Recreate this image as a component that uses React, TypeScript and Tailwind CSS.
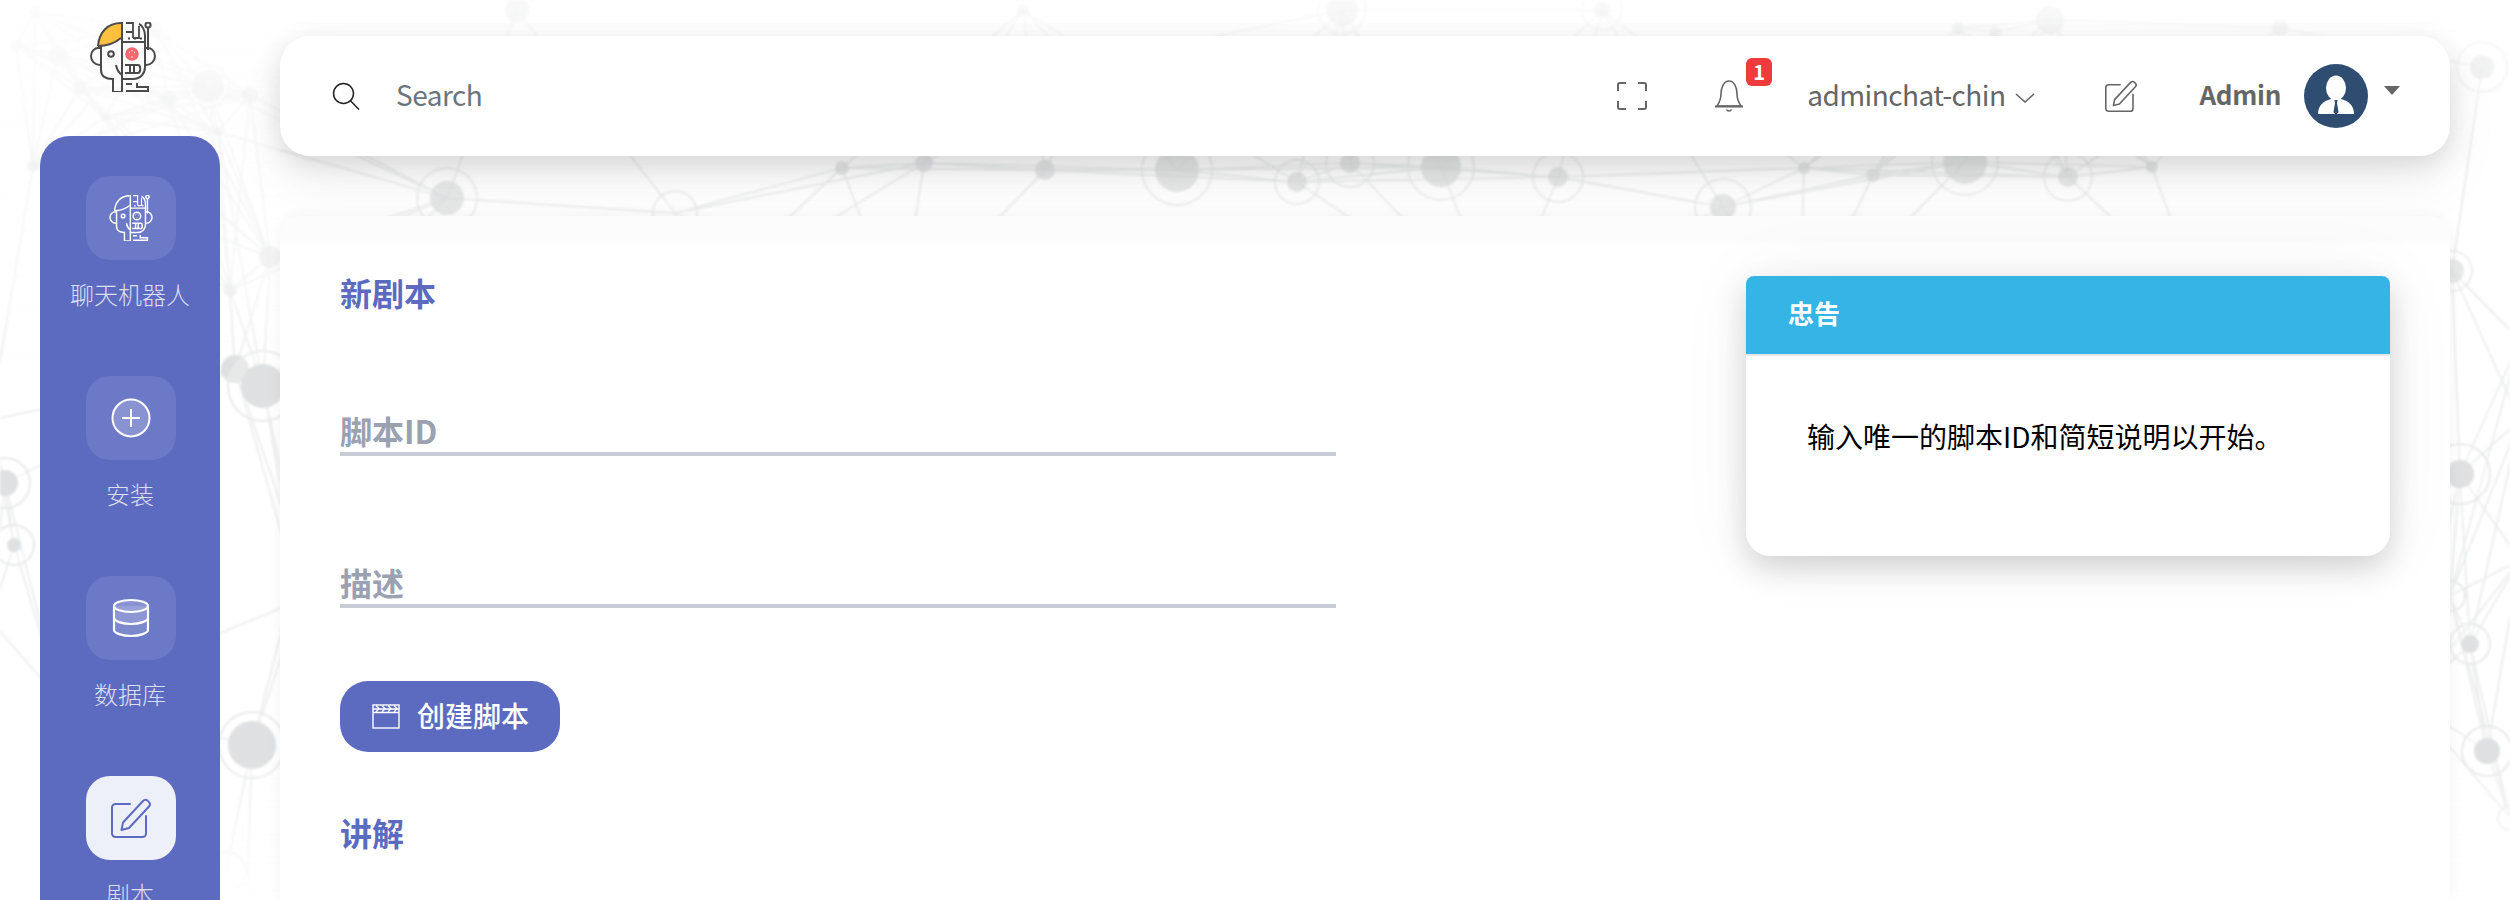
import React from "react";

const FONT = { fontFamily: '"Noto Sans CJK SC", "Noto Sans", sans-serif' };

type N = [number, number, number, number];
const nodes: N[] = [
  [16, 46, 6, 0], [58, 55, 10, 0], [80, 88, 7, 0], [208, 86, 16, 21], [168, 99, 8, 0], [250, 95, 8, 0], [105, 117, 4, 0],
  [218, 132, 4, 0], [33, 166, 6, 0], [270, 257, 11, 0], [230, 290, 7, 0], [155, 30, 8, 0], [35, 12, 6, 0],
  [235, 369, 14, 0], [263, 386, 22, 35], [5, 483, 13, 25], [14, 545, 7, 20], [252, 745, 24, 33], [226, 872, 0, 20], [247, 905, 0, 15],
  [447, 198, 17, 30], [1177, 170, 22, 35], [1045, 170, 10, 0], [924, 163, 9, 0], [842, 168, 7, 0], [1297, 182, 10, 22], [1350, 163, 10, 24],
  [675, 213, 0, 22], [517, 10, 12, 0], [1342, 10, 16, 24], [1023, 10, 6, 0],
  [1441, 167, 20, 33], [1558, 177, 10, 25], [1723, 207, 13, 28], [1873, 175, 7, 0], [1965, 162, 22, 33], [2068, 177, 10, 24], [2152, 167, 6, 0], [1804, 168, 6, 0],
  [1602, 10, 8, 20], [2050, 20, 14, 0], [1958, 28, 6, 0], [1995, 32, 6, 0], [2280, 28, 8, 0], [2482, 67, 12, 25],
  [2452, 271, 12, 20], [2460, 474, 14, 30], [2470, 644, 9, 20], [2450, 596, 0, 15], [2487, 751, 13, 25], [2510, 818, 0, 12],
  [60, 700, 0, 0], [2520, 340, 0, 0], [2520, 420, 0, 0], [2520, 560, 0, 0], [2410, 700, 0, 0], [-10, 620, 0, 0], [-10, 420, 0, 0],
  [700, 300, 0, 0], [900, 320, 0, 0], [1100, 60, 0, 0], [1500, 320, 0, 0], [1800, 330, 0, 0], [2200, 300, 0, 0], [300, 560, 0, 0], [300, 600, 0, 0],
];
const links: [number, number, number, number][] = [];
nodes.forEach((a, i) => {
  nodes.forEach((b, j) => {
    if (j > i && Math.hypot(a[0] - b[0], a[1] - b[1]) < 270) links.push([a[0], a[1], b[0], b[1]]);
  });
});

function Network() {
  return (
    <svg className="absolute inset-0 blur-[0.8px]" width={2510} height={900} viewBox="0 0 2510 900" fill="none">
      <defs>
        <linearGradient id="topFade" x1="0" y1="0" x2="0" y2="1">
          <stop offset="0" stopColor="#fff" stopOpacity="0.75" />
          <stop offset="0.3" stopColor="#fff" stopOpacity="0.55" />
          <stop offset="1" stopColor="#fff" stopOpacity="0" />
        </linearGradient>
        <linearGradient id="botFade" x1="0" y1="0" x2="0" y2="1">
          <stop offset="0" stopColor="#fff" stopOpacity="0" />
          <stop offset="1" stopColor="#fff" stopOpacity="1" />
        </linearGradient>
        <linearGradient id="leftFade" x1="0" y1="0" x2="0" y2="1">
          <stop offset="0" stopColor="#fff" stopOpacity="0.6" />
          <stop offset="0.8" stopColor="#fff" stopOpacity="0.5" />
          <stop offset="1" stopColor="#fff" stopOpacity="0" />
        </linearGradient>
      </defs>
      {links.map((l, i) => (
        <line key={i} x1={l[0]} y1={l[1]} x2={l[2]} y2={l[3]} stroke="#ebecec" strokeWidth={1.8} />
      ))}
      {nodes.map((n, i) => (
        <g key={i} opacity={n[1] < 300 ? 0.75 : 1}>
          {n[3] > 0 && <circle cx={n[0]} cy={n[1]} r={n[3]} stroke="#e8e9e9" strokeWidth={2} fill="#fff" fillOpacity={0.25} />}
          {n[2] > 0 && <circle cx={n[0]} cy={n[1]} r={n[2]} fill="#dfe0e1" />}
        </g>
      ))}
      <rect x={0} y={0} width={2510} height={150} fill="url(#topFade)" />
      <rect x={0} y={0} width={280} height={360} fill="url(#leftFade)" />
      <rect x={0} y={760} width={2510} height={140} fill="url(#botFade)" />
    </svg>
  );
}

function Head({ mono, className }: { mono?: boolean; className: string }) {
  const s = mono ? "#ffffff" : "#4a4a4a";
  return (
    <svg viewBox="0 0 66 70" className={className} fill="none" stroke={s} strokeWidth={mono ? 2.2 : 2} strokeLinecap="butt">
      {!mono && <path d="M31 1C19 1 10 9 8 24c7 0 17-3 23-8V1Z" fill="#fbc03d" stroke="none" />}
      <path d="M31 1C18 1 9 10 8 24" stroke={s} />
      <path d="M8 24c8 0 17-3 23-8" />
      <path d="M11 24v24c0 6 4 9 12 9v13h9" />
      <path d="M10 26H8c-3 0-7 3-7 8s4 9 9 9" />
      <path d="M56 26h2c3 0 7 3 7 8s-4 9-9 9" />
      <path d="M32 0v70" />
      <circle cx={21} cy={32} r={2.8} />
      <path d="M26 43c1 5 3 8 6 10" />
      <path d="M36 1h7v9h-7M49 4v12h-6M43 5v11" strokeWidth={1.8} />
      <path d="M32 20h23" />
      <path d="M38 16.5h2M44 16.5h2M50 16.5h2" />
      <path d="M49 2c3 1 6 6 6 12v31c0 6-4 12-12 12H32" />
      <circle cx={58} cy={3} r={2.6} />
      <path d="M58 6v22" />
      <circle cx={42} cy={32} r={5.8} fill={mono ? "none" : "#f5686d"} stroke={mono ? s : "#f5686d"} />
      <path d="M39 30.5h1M44 30.5h1M41.5 35h1M41.5 28.5h1" stroke={mono ? s : "#fff"} strokeWidth={1.4} />
      <path d="M35 43h13c3 0 3 8 0 8H35M40 43v8M44 43v8" />
      <path d="M36 69h22v-4H47v-4M36 62h6" />
    </svg>
  );
}

function EditIcon({ className, stroke, w = 2 }: { className: string; stroke: string; w?: number }) {
  return (
    <svg viewBox="0 0 40 40" className={className} fill="none" stroke={stroke} strokeWidth={w} strokeLinejoin="round" strokeLinecap="round">
      <path d="M19 6H4.5A3.5 3.5 0 0 0 1 9.500V35.500A3.500 3.500 0 0 0 4.500 39H31.500A3.500 3.500 0 0 0 35 35.500V18" />
      <path d="M12 24.500 32 3a3.200 3.200 0 0 1 5 0l1 1.200a3.200 3.200 0 0 1 0 4.300L18 30l-7.500 2z" />
    </svg>
  );
}

function NavItem({ label, active, children }: { label: string; active?: boolean; children: React.ReactNode }) {
  return (
    <div className="flex flex-col items-center h-[200px] shrink-0">
      <div className={"ml-[2px] w-[90px] h-[84px] rounded-[24px] flex items-center justify-center " + (active ? "bg-[#eef0f9]" : "bg-[#6c79c7]")}>
        {children}
      </div>
      <div className="mt-[16px] text-[24px] leading-[36px] text-[#dcdff2] font-light">{label}</div>
    </div>
  );
}

function Clapper() {
  return (
    <svg viewBox="0 0 28 25" className="w-[28px] h-[25px]" fill="none" stroke="#fff" strokeWidth={1.4}>
      <rect x={1} y={1} width={26} height={23} />
      <path d="M1 8.500h26M1 5h26" />
      <path d="M4 1.500l3 3-3 3.500M10 1.500l3 3-3 3.500M16 1.500l3 3-3 3.500M22 1.500l3 3-3 3.500" strokeWidth={1.2} />
    </svg>
  );
}

function Field({ label, className }: { label: string; className: string }) {
  return (
    <div className={"border-b-4 border-[#c8ccd6] " + className}>
      <div className="text-[32px] leading-[36px] pb-[4px] font-bold text-[#9aa1b1]">{label}</div>
    </div>
  );
}

export default function App() {
  return (
    <div className="relative w-full h-[900px] overflow-hidden bg-white" style={FONT}>
      <Network />
      <div className="relative flex h-full">
        <aside className="w-[180px] ml-[40px] shrink-0 flex flex-col">
          <div className="h-[136px] pt-[22px] pl-[50px] shrink-0">
            <Head className="w-[66px] h-[70px]" />
          </div>
          <nav className="flex-1 bg-[#5c6bc0] rounded-t-[30px] pt-[40px] flex flex-col overflow-hidden">
            <NavItem label="聊天机器人">
              <Head mono className="w-[44px] h-[46px]" />
            </NavItem>
            <NavItem label="安装">
              <svg viewBox="0 0 40 40" className="w-[40px] h-[40px]" fill="rgba(255,255,255,0.2)" stroke="#fff" strokeWidth={2}>
                <circle cx={20} cy={20} r={18.500} />
                <path d="M20 11v18M11 20h18" fill="none" />
              </svg>
            </NavItem>
            <NavItem label="数据库">
              <svg viewBox="0 0 38 40" className="w-[38px] h-[40px]" fill="none" stroke="#fff" strokeWidth={2.200}>
                <path d="M2 8v24c0 3 8 6 17 6s17-3 17-6V8" fill="rgba(255,255,255,0.12)" />
                <ellipse cx={19} cy={8} rx={17} ry={6} fill="rgba(255,255,255,0.2)" />
                <path d="M2 20c0 3 8 6 17 6s17-3 17-6" />
                <path d="M2 14h34v6c0 3-8 6-17 6s-17-3-17-6z" fill="rgba(255,255,255,0.12)" stroke="none" />
              </svg>
            </NavItem>
            <NavItem label="剧本" active>
              <EditIcon className="w-[40px] h-[40px]" stroke="#5c6bc0" />
            </NavItem>
          </nav>
        </aside>

        <main className="flex-1 min-w-0 ml-[60px] mr-[60px] pt-[36px] flex flex-col">
          <header className="h-[120px] shrink-0 bg-white rounded-[30px] shadow-[0_8px_28px_rgba(0,0,0,0.13),0_30px_60px_rgba(0,0,0,0.05)] flex items-center justify-between pl-[52px] pr-[50px]">
            <div className="flex items-center">
              <svg viewBox="0 0 28 28" className="w-[28px] h-[28px]" fill="none" stroke="#222" strokeWidth={1.500}>
                <circle cx={11.500} cy={11.500} r={10} />
                <path d="M18.500 18.800 27 27.500" />
              </svg>
              <span className="ml-[36px] text-[28px] leading-[36px] pb-[4px] tracking-[-0.5px] text-[#6c757d]">Search</span>
            </div>
            <div className="flex items-center text-[#666]">
              <svg viewBox="0 0 30 28" className="w-[30px] h-[28px]" fill="none" stroke="#666" strokeWidth={2}>
                <path d="M9 1H3a2 2 0 0 0-2 2v6M21 1h6a2 2 0 0 1 2 2v6M9 27H3a2 2 0 0 1-2-2v-6M21 27h6a2 2 0 0 0 2-2v-6" />
              </svg>
              <div className="relative ml-[67px] w-[30px] h-[32px]">
                <svg viewBox="0 0 30 32" className="w-[30px] h-[32px]" fill="none" stroke="#666" strokeWidth={1.600}>
                  <path d="M3 26c2-3 4-6 4-12 0-7 3-13 8-13s8 6 8 13c0 6 2 9 4 12z" />
                  <path d="M1 26.500h28" strokeWidth={2} />
                  <path d="M12.500 29.500c1 2 4 2 5 0" />
                </svg>
                <div className="absolute left-[32px] top-[-22px] w-[26px] h-[28px] rounded-[6px] bg-[#ef3b3b] text-white text-[20px] leading-[28px] font-bold text-center">1</div>
              </div>
              <span className="ml-[63px] text-[28px] leading-[36px] pb-[4px] tracking-[-0.55px]">adminchat-chin</span>
              <svg viewBox="0 0 20 10" className="ml-[10px] w-[20px] h-[10px] mt-[4px]" fill="none" stroke="#666" strokeWidth={1.600}>
                <path d="M1 1l9 8 9-8" />
              </svg>
              <EditIcon className="ml-[70px] w-[32px] h-[32px]" stroke="#666" />
              <span className="ml-[62px] text-[26px] leading-[36px] pb-[4px] font-bold tracking-[-0.3px]">Admin</span>
              <svg viewBox="0 0 64 64" className="ml-[23px] w-[64px] h-[64px]">
                <circle cx={32} cy={32} r={32} fill="#2e4d70" />
                <ellipse cx={32} cy={24} rx={10} ry={12.500} fill="#fff" />
                <path d="M14 50c0-8 5-13 13-15h10c8 2 13 7 13 15z" fill="#fff" />
                <path d="M30.500 36h3l-.5 3 1.500 9-2.500 3-2.500-3 1.500-9z" fill="#2e4d70" />
              </svg>
              <div className="ml-[16px] mb-[12px] w-0 h-0 border-l-[8px] border-r-[8px] border-t-[9px] border-l-transparent border-r-transparent border-t-[#666]" />
            </div>
          </header>

          <section className="flex-1 mt-[60px] bg-[linear-gradient(#fcfcfc_0,#fcfcfc_24px,#fff_30px)] rounded-t-[20px] pt-[60px] px-[60px] flex justify-between items-start shadow-[0_0_14px_rgba(0,0,0,0.05)]">
            <div className="w-[996px]">
              <h2 className="text-[32px] leading-[32px] mb-[8px] font-bold text-[#5c6bc0]">新剧本</h2>
              <Field label="脚本ID" className="mt-[104px]" />
              <Field label="描述" className="mt-[108px]" />
              <button className="mt-[73px] w-[220px] h-[71px] rounded-[28px] bg-[#5c6bc0] flex items-center pl-[32px] text-white text-[28px] font-medium">
                <Clapper />
                <span className="ml-[17px] leading-[36px] pb-[4px]">创建脚本</span>
              </button>
              <h2 className="mt-[64px] text-[32px] leading-[32px] mb-[8px] font-bold text-[#5c6bc0]">讲解</h2>
            </div>
            <div className="w-[644px] h-[280px] bg-white rounded-t-[8px] rounded-b-[24px] shadow-[0_12px_30px_rgba(0,0,0,0.16),0_0_80px_rgba(0,0,0,0.05)] overflow-hidden">
              <div className="h-[80px] bg-[#34b5e5] border-b-2 border-[#e5e6e8] pl-[42px] flex items-center">
                <span className="text-white text-[26px] leading-[32px] pb-[4px] font-bold">忠告</span>
              </div>
              <div className="pt-[60px] pl-[61px] text-[28px] leading-[40px] text-black">输入唯一的脚本ID和简短说明以开始。</div>
            </div>
          </section>
        </main>
      </div>
    </div>
  );
}
